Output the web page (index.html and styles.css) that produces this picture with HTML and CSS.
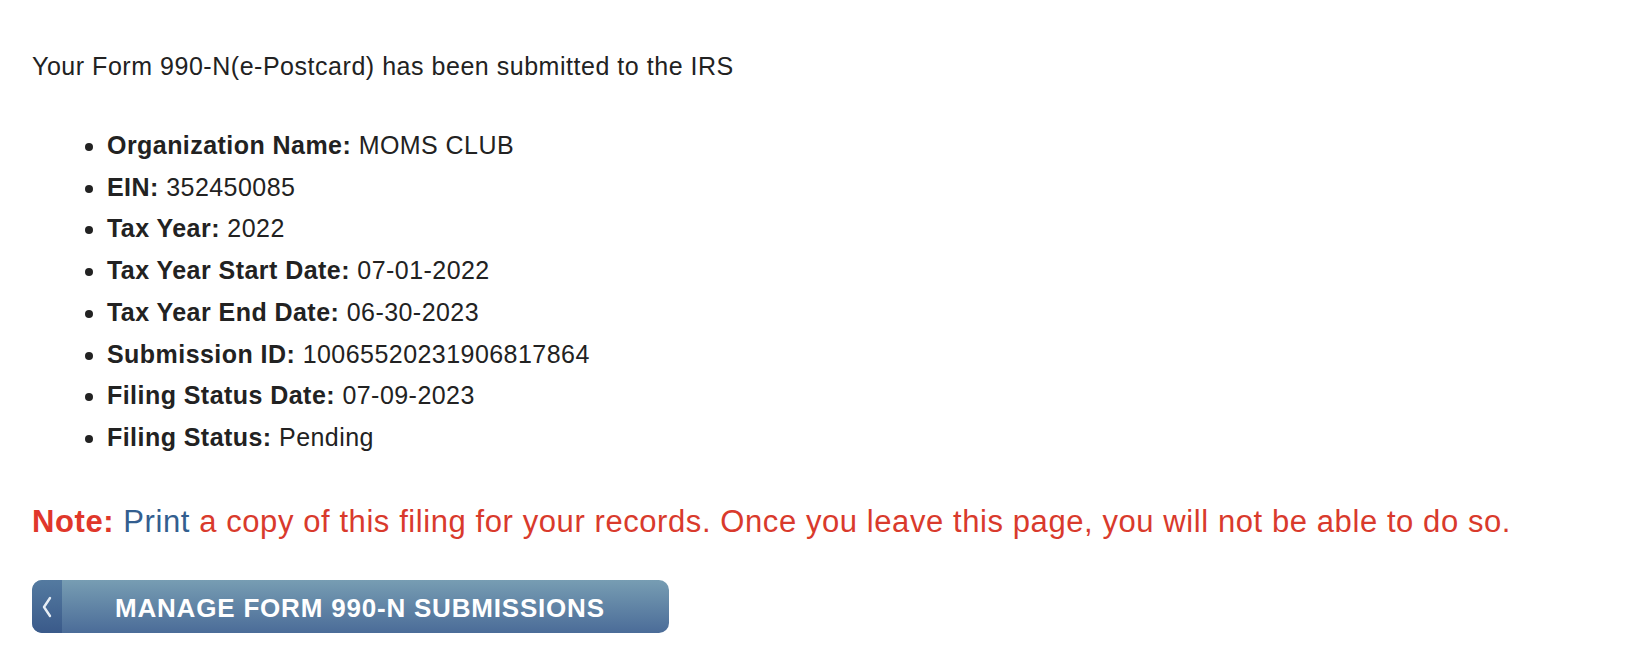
FILE: index.html
```html
<!DOCTYPE html>
<html lang="en">
<head>
<meta charset="utf-8">
<title>Form 990-N Submitted</title>
<link rel="stylesheet" href="styles.css">
</head>
<body>
<main class="page">
  <p class="intro">Your Form 990-N(e-Postcard) has been submitted to the IRS</p>
  <ul class="details">
    <li><b>Organization Name:</b> MOMS CLUB</li>
    <li><b>EIN:</b> 352450085</li>
    <li><b>Tax Year:</b> 2022</li>
    <li><b>Tax Year Start Date:</b> 07-01-2022</li>
    <li><b>Tax Year End Date:</b> 06-30-2023</li>
    <li><b>Submission ID:</b> 10065520231906817864</li>
    <li><b>Filing Status Date:</b> 07-09-2023</li>
    <li><b>Filing Status:</b> Pending</li>
  </ul>
  <p class="note"><b>Note:</b> <a class="print" href="#">Print</a> a copy of this filing for your records. Once you leave this page, you will not be able to do so.</p>
  <a class="manage-btn" href="#">
    <span class="btn-cap"><svg width="12" height="24" viewBox="0 0 12 24"><polyline points="9,3 3,12 9,21" fill="none" stroke="#e6edf4" stroke-width="2.4" stroke-linecap="round" stroke-linejoin="round"/></svg></span>
    <span class="btn-label">MANAGE FORM 990-N SUBMISSIONS</span>
  </a>
</main>
</body>
</html>
```
FILE: styles.css
```css
html, body {
  margin: 0;
  padding: 0;
  background: #ffffff;
}
body {
  font-family: "Liberation Sans", Arial, Helvetica, sans-serif;
  color: #222222;
}
.page {
  padding: 51px 32px 0 32px;
}
.intro {
  margin: 0;
  font-size: 25px;
  line-height: 30px;
  letter-spacing: 0.53px;
}
.details {
  margin: 44px 0 0 0;
  padding: 0 0 0 75px;
  font-size: 25px;
  line-height: 41.7px;
  letter-spacing: 0.45px;
}
.details b {
  font-weight: bold;
}
.note {
  margin: 45.5px 0 0 0;
  font-size: 31px;
  line-height: 36px;
  color: #d93a2c;
  letter-spacing: 0.58px;
}
.note b {
  font-weight: bold;
  color: #e0372a;
}
.print {
  color: #335e8f;
  text-decoration: none;
}
.manage-btn {
  margin-top: 40px;
  display: flex;
  width: 637px;
  height: 53px;
  border-radius: 10px;
  overflow: hidden;
  text-decoration: none;
  background: linear-gradient(#779db3, #4b6c98);
}
.btn-cap {
  width: 30px;
  flex: none;
  display: flex;
  align-items: center;
  justify-content: center;
  background: linear-gradient(#547aa0, #3a5a8a);
}
.btn-label {
  flex: 1;
  display: flex;
  align-items: center;
  padding: 3px 0 0 53px;
  color: #ffffff;
  font-weight: bold;
  font-size: 26px;
  letter-spacing: 0.8px;
}
```
